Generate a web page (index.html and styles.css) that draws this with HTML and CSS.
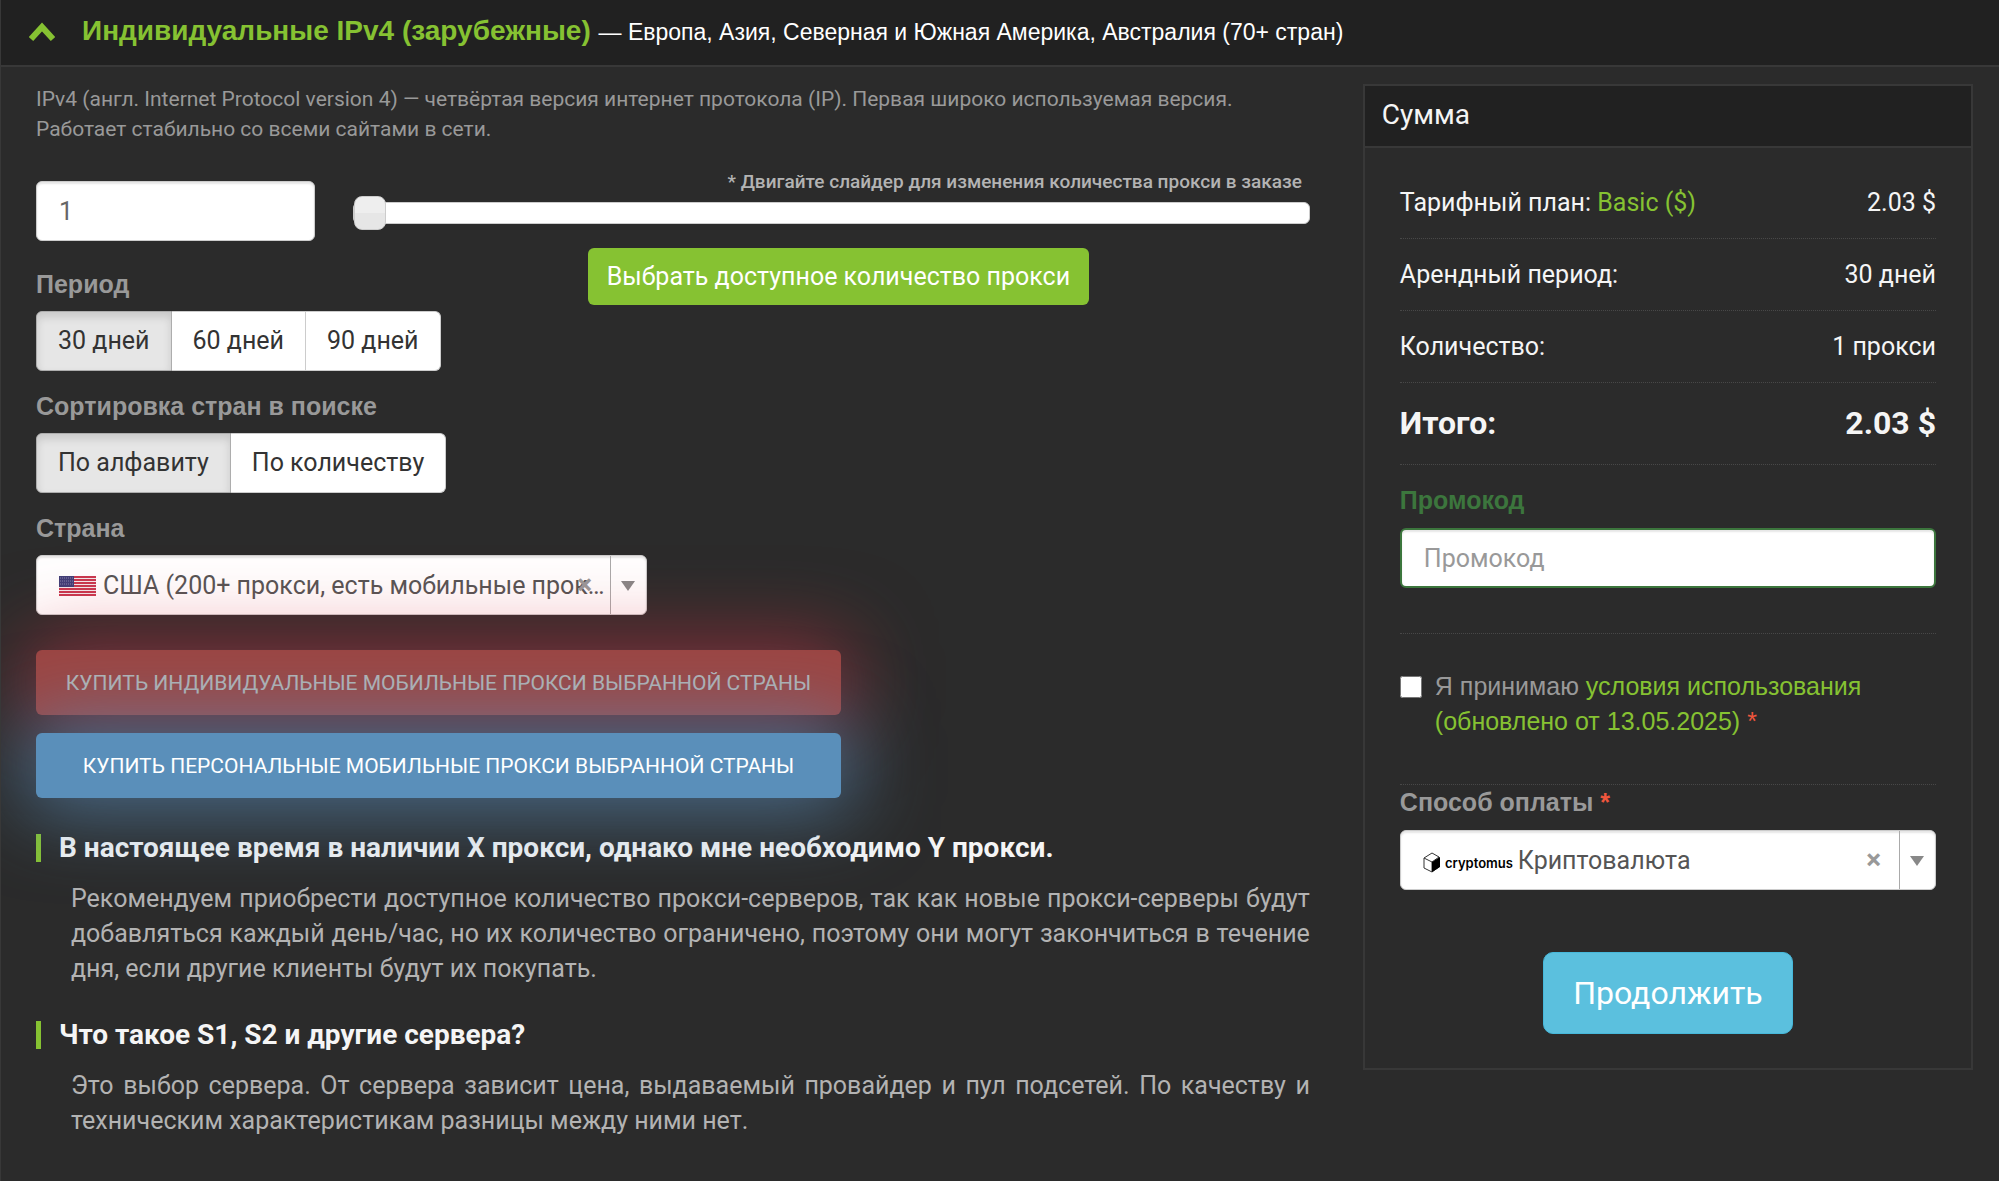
FILE: index.html
```html
<!DOCTYPE html>
<html lang="ru">
  <head>
    <meta charset="UTF-8" />
    <meta name="viewport" content="width=device-width, initial-scale=1.0" />
    <title>Индивидуальные IPv4</title>
    <link rel="stylesheet" href="styles.css">
  </head>
  <body>
    <header class="panel-heading">
      <svg class="chevron" viewBox="0 0 26 20" aria-hidden="true">
        <path d="M2 17 L13 5 L24 17" fill="none" stroke="#86c232" stroke-width="6" />
      </svg>
      <h1><a href="#order">Индивидуальные IPv4 (зарубежные)</a> <small>— Европа, Азия, Северная и Южная Америка, Австралия (70+ стран)</small></h1>
    </header>

    <form id="order" class="order">
      <main class="options">
        <p class="description">IPv4 (англ. Internet Protocol version 4) — четвёртая версия интернет протокола (IP). Первая широко используемая версия. Работает стабильно со всеми сайтами в сети.</p>

        <div class="amount">
          <input type="text" class="control amount-input" id="amount" value="1" aria-label="Количество прокси" />
          <div class="amount-slider">
            <label class="hint" for="slider">* Двигайте слайдер для изменения количества прокси в заказе</label>
            <input type="range" class="slider" id="slider" min="1" max="1000" value="1" />
            <button type="button" class="btn btn-green">Выбрать доступное количество прокси</button>
          </div>
        </div>

        <fieldset class="group">
          <legend class="label">Период</legend>
          <div class="toggle">
            <input type="radio" name="period" id="period-30" checked />
            <label for="period-30">30 дней</label>
            <input type="radio" name="period" id="period-60" />
            <label for="period-60">60 дней</label>
            <input type="radio" name="period" id="period-90" />
            <label for="period-90">90 дней</label>
          </div>
        </fieldset>

        <fieldset class="group">
          <legend class="label">Сортировка стран в поиске</legend>
          <div class="toggle">
            <input type="radio" name="sort" id="sort-alpha" checked />
            <label for="sort-alpha">По алфавиту</label>
            <input type="radio" name="sort" id="sort-count" />
            <label for="sort-count">По количеству</label>
          </div>
        </fieldset>

        <div class="group">
          <label class="label" for="country">Страна</label>
          <div class="select select-country">
            <svg class="select-icon" width="37" height="20" viewBox="0 0 37 20" aria-hidden="true">
              <rect width="37" height="20" fill="#f3e9ec" />
              <path d="M0 1H37M0 4H37M0 7H37M0 10H37M0 13H37M0 16H37M0 19H37" stroke="#c8384f" stroke-width="2" />
              <rect width="15" height="11" fill="#403f78" />
              <path d="M1 2H14M1 5H14M1 8H14" stroke="#8583ab" stroke-width="1" stroke-dasharray="1 1" />
            </svg>
            <select id="country">
              <option>США (200+ прокси, есть мобильные прокси)</option>
            </select>
            <button type="button" class="clear" aria-label="Очистить">×</button>
          </div>
        </div>

        <div class="buy">
          <button type="button" class="btn btn-buy btn-red">Купить индивидуальные мобильные прокси выбранной страны</button>
          <button type="button" class="btn btn-buy btn-blue">Купить персональные мобильные прокси выбранной страны</button>
        </div>

        <section class="faq">
          <h2>В настоящее время в наличии X прокси, однако мне необходимо Y прокси.</h2>
          <p>Рекомендуем приобрести доступное количество прокси-серверов, так как новые прокси-серверы будут добавляться каждый день/час, но их количество ограничено, поэтому они могут закончиться в течение дня, если другие клиенты будут их покупать.</p>
          <h2>Что такое S1, S2 и другие сервера?</h2>
          <p>Это выбор сервера. От сервера зависит цена, выдаваемый провайдер и пул подсетей. По качеству и техническим характеристикам разницы между ними нет.</p>
        </section>
      </main>

      <aside class="summary">
        <h2 class="summary-title">Сумма</h2>
        <div class="summary-body">
          <dl class="rows">
            <div class="row">
              <dt>Тарифный план: <a href="#plan">Basic ($)</a></dt>
              <dd>2.03 $</dd>
            </div>
            <div class="row">
              <dt>Арендный период:</dt>
              <dd>30 дней</dd>
            </div>
            <div class="row">
              <dt>Количество:</dt>
              <dd>1 прокси</dd>
            </div>
            <div class="row total">
              <dt>Итого:</dt>
              <dd>2.03 $</dd>
            </div>
          </dl>

          <div class="promo">
            <label class="label" for="promo">Промокод</label>
            <input type="text" class="control" id="promo" placeholder="Промокод" />
          </div>

          <div class="terms">
            <input type="checkbox" id="terms" />
            <label for="terms">Я принимаю <a href="#terms">условия использования (обновлено от 13.05.2025)</a> <span class="required">*</span></label>
          </div>

          <label class="label" for="payment">Способ оплаты <span class="required">*</span></label>
          <div class="select select-payment">
            <svg class="select-icon" width="92" height="24" viewBox="0 0 92 24" aria-hidden="true">
              <path d="M1 7 L9 2 L16 6 L16 16 L9 21 L1 17 Z M1 7 L9 11 L16 6 M9 11 V21" fill="#fff" stroke="#333" stroke-width="1" />
              <path d="M9 11 L17 6 V16 L9 21 Z" fill="#000" />
              <text x="22" y="17" class="logo-text">cryptomus</text>
            </svg>
            <select id="payment">
              <option>Криптовалюта</option>
            </select>
            <button type="button" class="clear" aria-label="Очистить">×</button>
          </div>

          <button type="submit" class="btn btn-submit">Продолжить</button>
        </div>
      </aside>
    </form>
  </body>
</html>
```

FILE: styles.css
```css
* {
    box-sizing: border-box;
}
body {
    margin: 0;
    min-height: 100vh;
    border-left: 1px solid #383838;
    background-color: #2b2b2b;
    color: #999;
    font-family: Roboto, "Liberation Sans", sans-serif;
    font-size: 25px;
    line-height: 35px;
}
a {
    color: #86c232;
    text-decoration: none;
}
h1, h2, p, dl, dd, fieldset {
    margin: 0;
    padding: 0;
    border: none;
}
input, select, button {
    font-family: inherit;
    font-size: 25px;
}
.panel-heading {
    display: flex;
    align-items: center;
    gap: 27px;
    height: 67px;
    padding: 0 28px 2px;
    border-bottom: 2px solid #383838;
    background-color: #212121;
}
.chevron {
    width: 26px;
    height: 20px;
}
h1 {
    font-family: "Liberation Sans", Arial, sans-serif;
    font-size: 28px;
}
h1 small {
    color: #fff;
    font-size: 23px;
    font-weight: normal;
}
.order {
    display: grid;
    grid-template-columns: minmax(0, 1fr) 31.5%;
    gap: 53px;
    align-items: start;
    padding: 17px 26px 40px 35px;
}
.description {
    max-width: 1240px;
    font-size: 21px;
    line-height: 30px;
}
.control {
    width: 100%;
    height: 60px;
    padding: 0 22px;
    border: 1px solid #ccc;
    border-radius: 6px;
    background-color: #fff;
    box-shadow: inset 0 2px 2px rgba(0, 0, 0, 0.1);
    color: #666;
}
.amount {
    display: grid;
    grid-template-columns: 279px 1fr;
    gap: 38px;
    height: 86px;
    margin-top: 37px;
}
.amount-slider {
    display: flex;
    flex-direction: column;
    margin-top: -13px;
}
.hint {
    margin-right: 8px;
    color: #b3b3b3;
    font-size: 19px;
    font-weight: 500;
    line-height: 28px;
    text-align: right;
}
.slider {
    width: 100%;
    height: 34px;
    margin: 0;
    background: none;
    appearance: none;
}
.slider::-webkit-slider-runnable-track {
    height: 22px;
    border: 1px solid #ccc;
    border-radius: 6px;
    background-color: #fff;
}
.slider::-webkit-slider-thumb {
    width: 32px;
    height: 34px;
    margin-top: -7px;
    border: 1px solid #ccc;
    border-radius: 8px;
    background: linear-gradient(#eee 50%, #e6e6e6 50%);
    appearance: none;
}
.btn {
    border: none;
    border-radius: 6px;
    color: #fff;
}
.btn-green {
    align-self: center;
    height: 57px;
    margin: 18px 0 0 14px;
    padding: 0 19px;
    background-color: #86c232;
}
.label {
    display: block;
    padding: 0;
    margin-bottom: 9px;
    font-family: "Liberation Sans", Arial, sans-serif;
    font-weight: bold;
}
.group {
    margin-bottom: 18px;
}
.toggle {
    display: flex;
}
.toggle input {
    position: absolute;
    opacity: 0;
}
.toggle label {
    height: 60px;
    padding: 0 21px;
    border: 1px solid #ccc;
    border-left: none;
    background-color: #fff;
    color: #333;
    line-height: 58px;
}
.toggle label:first-of-type {
    border-left: 1px solid #ccc;
    border-radius: 6px 0 0 6px;
}
.toggle label:last-of-type {
    border-radius: 0 6px 6px 0;
}
.toggle input:checked + label {
    border-color: #adadad;
    background-color: #e6e6e6;
    box-shadow: inset 0 5px 8px rgba(0, 0, 0, 0.13);
}
.select {
    position: relative;
    background: #fff;
    border: 1px solid #ccc;
    border-radius: 6px;
    box-shadow: inset 0 2px 2px rgba(0, 0, 0, 0.1);
}
.select::after {
    content: "";
    position: absolute;
    right: 11px;
    top: 25px;
    border: 7px solid transparent;
    border-top: 10px solid #888;
    border-bottom: none;
}
.select select {
    display: block;
    width: calc(100% - 35px);
    height: 58px;
    border: none;
    border-right: 1px solid #aaa;
    background: none;
    color: #555;
    text-overflow: ellipsis;
    appearance: none;
}
.select-icon {
    position: absolute;
    left: 22px;
    top: 20px;
}
.clear {
    position: absolute;
    right: 54px;
    top: 13px;
    padding: 0;
    border: none;
    background: none;
    color: #999;
    font-size: 28px;
    font-weight: bold;
    line-height: 32px;
}
.select-country {
    max-width: 611px;
}
.select-country select {
    padding: 0 4px 0 66px;
}
.select-payment select {
    padding: 0 60px 0 117px;
}
.logo-text {
    font: 600 13px Inter, sans-serif;
}
.buy {
    position: relative;
    display: flex;
    flex-direction: column;
    gap: 18px;
    max-width: 805px;
    margin-top: 35px;
}
.btn-buy {
    position: relative;
    height: 65px;
    font-size: 21px;
    text-transform: uppercase;
}
.btn-red {
    background-color: #d9534f;
    box-shadow: 0 0 80px 10px rgba(220, 53, 69, 0.8);
    opacity: 0.65;
}
.btn-blue {
    background-color: #5a8fba;
    box-shadow: 0 0 80px 12px rgba(90, 143, 186, 0.7);
}
.faq {
    margin-top: 36px;
}
.faq h2 {
    margin-bottom: 19px;
    padding-left: 18px;
    border-left: 5px solid #86c232;
    color: #f5f5f5;
    font-size: 28px;
    line-height: 28px;
}
.faq p {
    margin-bottom: 35px;
    padding-left: 35px;
    color: #b3b3b3;
    text-align: justify;
}
.summary {
    border: 2px solid #383838;
}
.summary-title {
    height: 62px;
    padding: 0 17px;
    border-bottom: 2px solid #383838;
    background-color: #212121;
    color: #f5f5f5;
    font-size: 28px;
    font-weight: normal;
    line-height: 58px;
}
.summary-body {
    display: flex;
    flex-direction: column;
    padding: 19px 35px 34px;
}
.summary .label {
    margin-bottom: 10px;
}
.row {
    display: flex;
    justify-content: space-between;
    padding: 18px 0;
    border-bottom: 1px dotted #484848;
    color: #f5f5f5;
}
.total {
    padding: 23px 0;
    font-size: 32px;
    font-weight: bold;
}
.promo {
    padding: 18px 0 45px;
    border-bottom: 1px dotted #484848;
}
.promo .label {
    color: #3c763d;
}
.promo .control {
    border: 2px solid #3c763d;
}
.control::placeholder {
    color: #999;
}
.terms {
    display: flex;
    gap: 13px;
    align-items: flex-start;
    padding: 35px 0 45px;
    border-bottom: 1px dotted #484848;
    font-family: "Liberation Sans", Arial, sans-serif;
}
.terms input {
    flex: none;
    width: 22px;
    height: 22px;
    margin: 7px 0;
}
.required {
    color: #f0563d;
}
.btn-submit {
    align-self: center;
    height: 82px;
    margin-top: 62px;
    padding: 0 29px;
    border: 1px solid #46b8da;
    border-radius: 10px;
    background-color: #5bc0de;
    font-size: 32px;
}
```
